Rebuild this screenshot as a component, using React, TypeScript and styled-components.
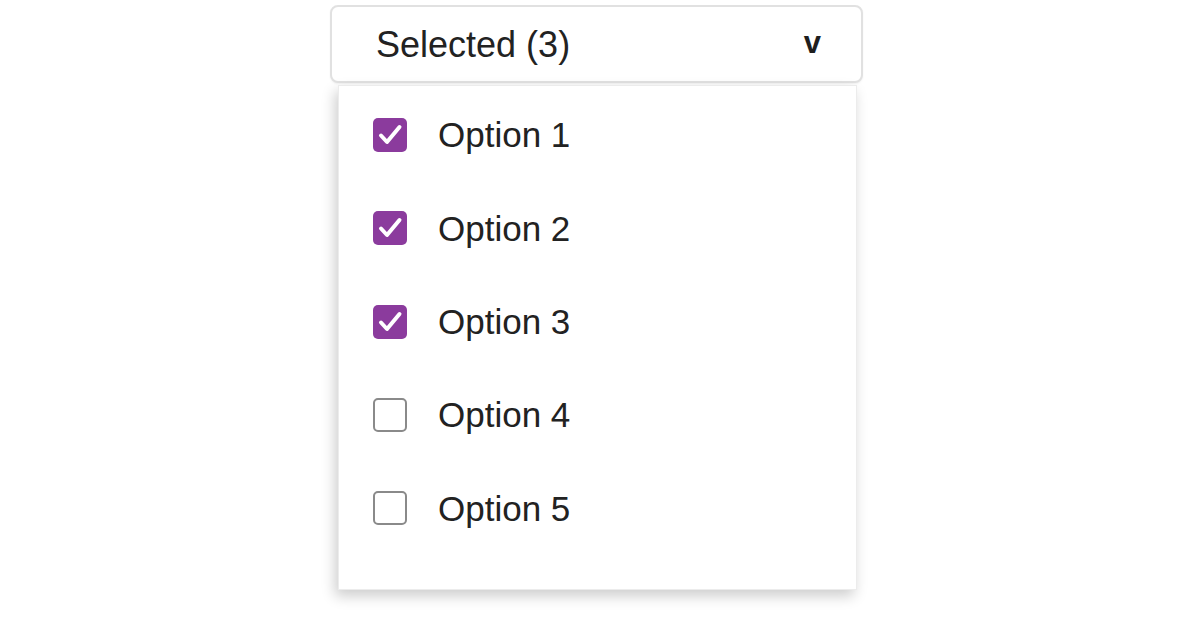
import React, { useState } from "react";
import styled, { createGlobalStyle } from "styled-components";

const GlobalStyle = createGlobalStyle`
  html, body {
    margin: 0;
    padding: 0;
    background: #ffffff;
  }
  body {
    font-family: "Liberation Sans", Arial, Helvetica, sans-serif;
    color: #222222;
  }
`;

const Page = styled.div`
  width: 1196px;
  height: 628px;
  display: flex;
  justify-content: center;
  padding-top: 5px;
  box-sizing: border-box;
  overflow: hidden;
`;

const Dropdown = styled.div`
  width: 533px;
  display: flex;
  flex-direction: column;
  margin-right: 3px;
`;

const Trigger = styled.button`
  height: 78px;
  box-sizing: border-box;
  display: flex;
  align-items: center;
  justify-content: space-between;
  padding: 0 40px 0 44px;
  background: #ffffff;
  border: 2px solid #e1e1e1;
  border-radius: 8px;
  box-shadow: 0 1px 2px rgba(0, 0, 0, 0.06);
  font-family: "Liberation Sans", Arial, sans-serif;
  font-size: 36px;
  color: #222222;
  cursor: pointer;
`;

const Label = styled.span`
  line-height: 1;
  padding-top: 2px;
`;

const Chevron = styled.span`
  font-size: 31px;
  font-weight: 700;
  line-height: 1;
  color: #1e1e1e;
  margin-top: -4px;
`;

const Menu = styled.div`
  margin: 2px 6px 0 8px;
  height: 505px;
  box-sizing: border-box;
  padding: 2px 34px 34px;
  background: #ffffff;
  border: 1px solid #ececec;
  box-shadow: -3px 6px 13px rgba(0, 0, 0, 0.2);
  display: flex;
  flex-direction: column;
`;

const Row = styled.label`
  height: 93.75px;
  display: flex;
  align-items: center;
  gap: 31px;
  cursor: pointer;
  font-size: 35px;
  color: #222222;
`;

const Box = styled.span<{ $checked: boolean }>`
  width: 34px;
  height: 34px;
  box-sizing: border-box;
  flex: none;
  border-radius: 5px;
  display: flex;
  align-items: center;
  justify-content: center;
  background: ${(p) => (p.$checked ? "#8b3b9d" : "#ffffff")};
  border: ${(p) => (p.$checked ? "none" : "2px solid #8a8a8a")};
`;

const OptionText = styled.span`
  line-height: 1;
`;

const Check = () => (
  <svg width="34" height="34" viewBox="0 0 34 34" fill="none">
    <path
      d="M8 17.5 L14 24 L26.5 9"
      stroke="#ffffff"
      strokeWidth="4"
      strokeLinecap="round"
      strokeLinejoin="round"
    />
  </svg>
);

const options = ["Option 1", "Option 2", "Option 3", "Option 4", "Option 5"];

export default function App() {
  const [checked, setChecked] = useState<boolean[]>([true, true, true, false, false]);
  const count = checked.filter(Boolean).length;
  return (
    <>
      <GlobalStyle />
      <Page>
        <Dropdown>
          <Trigger type="button">
            <Label>Selected ({count})</Label>
            <Chevron>v</Chevron>
          </Trigger>
          <Menu>
            {options.map((o, i) => (
              <Row
                key={o}
                onClick={() =>
                  setChecked((c) => c.map((v, j) => (j === i ? !v : v)))
                }
              >
                <Box $checked={checked[i]}>{checked[i] && <Check />}</Box>
                <OptionText>{o}</OptionText>
              </Row>
            ))}
          </Menu>
        </Dropdown>
      </Page>
    </>
  );
}
